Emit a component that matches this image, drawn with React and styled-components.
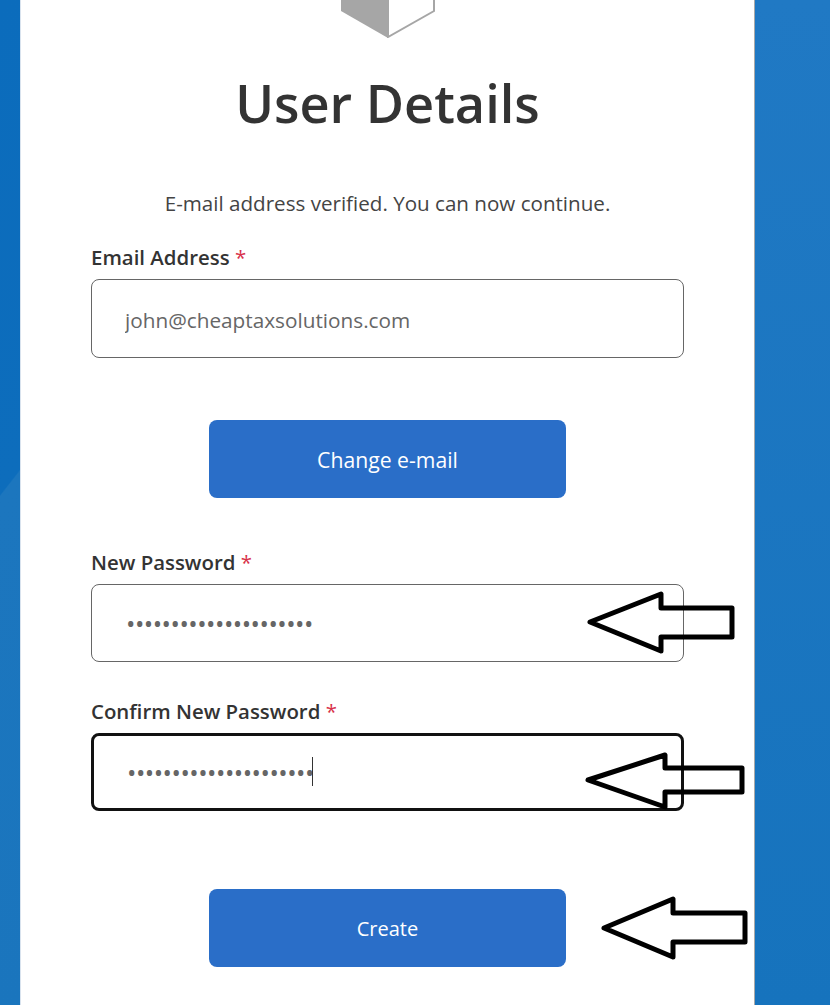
import React from 'react';
import styled, { createGlobalStyle } from 'styled-components';

const Global = createGlobalStyle`
  html, body {
    margin: 0;
    padding: 0;
    background: #1673bd;
  }
  * {
    box-sizing: border-box;
  }
`;

// outlines traced from the annotated screenshot
const arrows = [
  '590,622 661,594 661,608 732,608 732,637 661,637 661,651',
  '588,780 665,755 665,768 742,768 742,792 665,792 665,807',
  '604,928 673,899 673,913 745,913 745,942 673,942 673,957'
];

const App = () => {
  return (
    <>
      <Global />
      <Page>
        <Card>
          <Logo viewBox='0 0 94 38' aria-hidden='true'>
            <polygon points='0,0 47,0 47,38 0,11' fill='#a6a6a6' />
            <polyline points='47,0 47,37 93,11 93,0' fill='#fff' stroke='#a6a6a6' strokeWidth='2' />
          </Logo>
          <Title>User Details</Title>
          <Intro>E-mail address verified. You can now continue.</Intro>

          <Field $top={25}>
            <Label htmlFor='email'>Email Address <Required>*</Required></Label>
            <Input id='email' type='text' defaultValue='john@cheaptaxsolutions.com' readOnly />
          </Field>
          <Button type='button' $top={62} $size={21.2}>Change e-mail</Button>

          <Field $top={50}>
            <Label htmlFor='password'>New Password <Required>*</Required></Label>
            <Input id='password' type='password' defaultValue='aaaaaaaaaaaaaaaaaaaaa' readOnly $secret />
          </Field>
          <Field $top={35}>
            <Label htmlFor='confirm'>Confirm New Password <Required>*</Required></Label>
            <InputWrap>
              <Input id='confirm' type='password' defaultValue='aaaaaaaaaaaaaaaaaaaaa' readOnly $secret $focused />
              <Caret />
            </InputWrap>
          </Field>
          <Button type='button' $top={78} $size={20}>Create</Button>
        </Card>

        <Arrows viewBox='0 0 830 1005' aria-hidden='true'>
          {arrows.map(points => (
            <polygon key={points} points={points} fill='none' stroke='#000' strokeWidth='5' strokeLinejoin='round' />
          ))}
        </Arrows>
      </Page>
    </>
  );
};

export default App;

const Page = styled.div`
  position: relative;
  width: 830px;
  height: 1005px;
  overflow: hidden;
  padding-left: 20px;
  font-family: 'Open Sans', 'Noto Sans', sans-serif;
  background:
    linear-gradient(to bottom, #2079c4 0, #1673bd 100%) right / 75px 100% no-repeat,
    linear-gradient(128deg, #0b6cbc 0, #0d6dbc 48%, #1c76be 48.2%, #1a75bd 100%) left / 20px 100% no-repeat;
`;

const Card = styled.div`
  width: 735px;
  height: 1005px;
  background: #fff;
  border-left: 1px solid #d9e3ee;
  border-right: 1px solid #a9a9a9;
  padding: 0 70px;
  display: flex;
  flex-direction: column;
`;

const Logo = styled.svg`
  display: block;
  align-self: center;
  flex: none;
  width: 94px;
  height: 38px;
`;

const Title = styled.h1`
  margin: 28px 0 0;
  text-align: center;
  font-size: 52.3px;
  line-height: 74px;
  font-weight: 600;
  color: #333;
`;

const Intro = styled.p`
  margin: 48px 0 0;
  text-align: center;
  font-size: 20.6px;
  line-height: 30px;
  color: #444;
`;

const Field = styled.div`
  margin-top: ${props => props.$top}px;
`;

const Label = styled.label`
  display: block;
  font-size: 20.4px;
  line-height: 28px;
  font-weight: 600;
  color: #333;
  margin-bottom: 8px;
`;

const Required = styled.span`
  color: #d8314a;
  font-weight: 400;
`;

const InputWrap = styled.div`
  position: relative;
`;

const Input = styled.input`
  display: block;
  width: 593px;
  height: ${props => (props.$secret ? 78 : 79)}px;
  padding: ${props => (props.$secret ? 0 : 2)}px ${props => (props.$focused ? 33 : props.$secret ? 34 : 33)}px 0;
  background: #fff;
  border: ${props => (props.$focused ? '3px solid #111' : '1px solid #666')};
  border-radius: 8px;
  outline: none;
  font-family: inherit;
  font-size: ${props => (props.$secret ? 25 : 20.75)}px;
  color: #666;
  letter-spacing: ${props => (props.$secret ? '-0.5px' : '0')};
`;

const Caret = styled.span`
  position: absolute;
  left: 221px;
  top: 24px;
  width: 1px;
  height: 29px;
  background: #333;
`;

const Button = styled.button`
  align-self: center;
  flex: none;
  width: 357px;
  height: 78px;
  margin-top: ${props => props.$top}px;
  background: #2a6ec8;
  color: #fff;
  border: none;
  border-radius: 8px;
  font-family: inherit;
  font-size: ${props => props.$size}px;
`;

const Arrows = styled.svg`
  position: absolute;
  top: 0;
  left: 0;
  width: 830px;
  height: 1005px;
  pointer-events: none;
`;
